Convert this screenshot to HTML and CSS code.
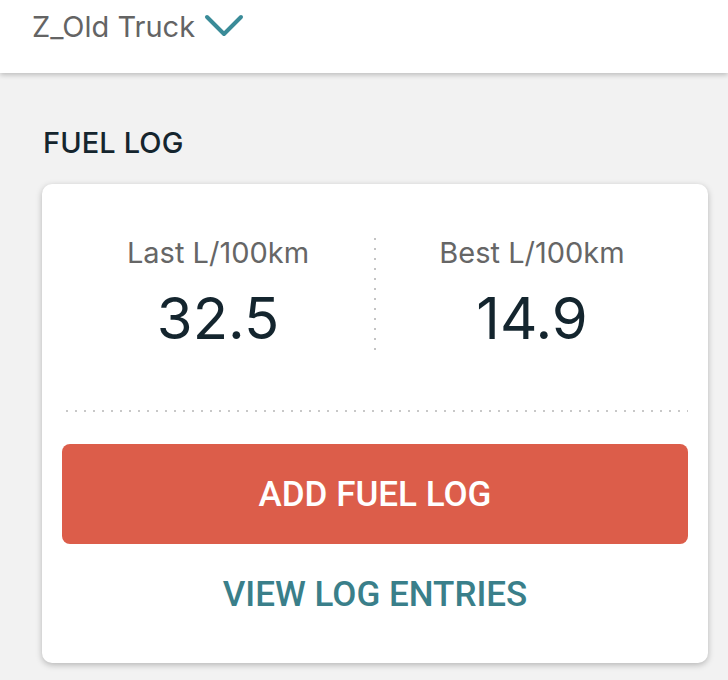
FILE: index.html
```html
<!DOCTYPE html>
<html>
<head>
<meta charset="utf-8">
<link rel="stylesheet" href="styles.css">
</head>
<body>
<header class="topbar">
  <span class="vehicle">Z_Old Truck</span>
  <svg class="chev" width="40" height="24" viewBox="0 0 40 24"><path d="M3 3 L20 20 L37 3" fill="none" stroke="#3a8b98" stroke-width="4" stroke-linecap="round" stroke-linejoin="round"/></svg>
</header>
<main class="content">
  <h2 class="section-title">FUEL LOG</h2>
  <section class="card">
    <div class="stats">
      <div class="stat">
        <div class="stat-label">Last L/100km</div>
        <div class="stat-value">32.5</div>
      </div>
      <div class="vdiv"></div>
      <div class="stat">
        <div class="stat-label">Best L/100km</div>
        <div class="stat-value">14.9</div>
      </div>
    </div>
    <div class="hdiv"></div>
    <button class="btn-add">ADD FUEL LOG</button>
    <a class="link-view">VIEW LOG ENTRIES</a>
  </section>
</main>
</body>
</html>
```
FILE: styles.css
```css
html, body {
  margin: 0;
  padding: 0;
  background: #f2f2f2;
  font-family: Inter, "Noto Sans", sans-serif;
  height: 680px;
  overflow: hidden;
}
.topbar {
  height: 73px;
  background: #fff;
  box-shadow: 0 2px 5px rgba(0,0,0,0.22);
  display: flex;
  align-items: flex-start;
  padding-left: 32px;
  position: relative;
  z-index: 1;
}
.vehicle {
  font-size: 29px;
  color: #646464;
  line-height: 34px;
  margin-top: 10px;
}
.chev {
  margin-left: 9px;
  margin-top: 14px;
}
.content {
  padding: 0 20px 0 42px;
}
.section-title {
  margin: 0;
  padding-top: 54px;
  padding-left: 1px;
  font-size: 29px;
  font-weight: 500;
  color: #15252e;
  line-height: 32px;
  letter-spacing: 0.1px;
}
.card {
  margin-top: 25px;
  background: #fff;
  border-radius: 10px;
  box-shadow: 0 2px 6px rgba(0,0,0,0.25);
  padding: 0 20px;
  height: 479px;
  box-sizing: border-box;
  display: flex;
  flex-direction: column;
}
.stats {
  display: grid;
  grid-template-columns: 1fr 2px 1fr;
  margin-top: 52px;
}
.stat {
  display: flex;
  flex-direction: column;
  align-items: center;
}
.stat-label {
  font-size: 29px;
  color: #666;
  line-height: 34px;
}
.stat-value {
  font-size: 58px;
  color: #14252e;
  line-height: 68px;
  margin-top: 14px;
}
.vdiv {
  height: 112px;
  margin-top: 2px;
  background: repeating-linear-gradient(to bottom, #c4c4c4 0 2px, transparent 2px 10px);
}
.hdiv {
  margin: 58px 0 0 4px;
  height: 2px;
  background: repeating-linear-gradient(to right, #c8c8c8 0 2px, transparent 2px 9px);
}
.btn-add {
  margin-top: 32px;
  height: 100px;
  border: none;
  border-radius: 8px;
  background: #dc5d4a;
  color: #fff;
  font-family: Roboto, "Noto Sans", sans-serif;
  font-size: 35px;
  font-weight: 500;
  padding: 0;
}
.link-view {
  display: block;
  text-align: center;
  margin-top: 30px;
  font-family: Roboto, "Noto Sans", sans-serif;
  font-size: 35px;
  font-weight: 500;
  color: #3a7f8a;
  line-height: 42px;
}
```
